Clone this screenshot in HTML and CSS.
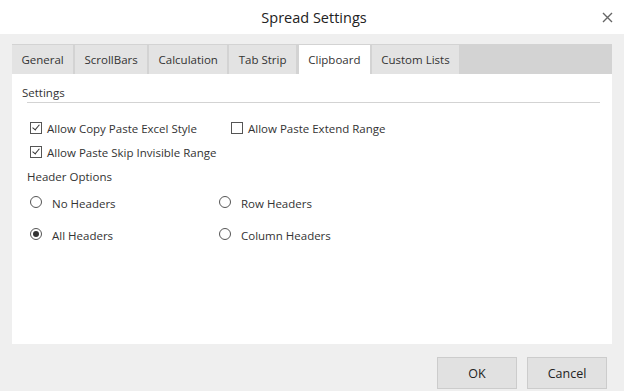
FILE: index.html
```html
<!DOCTYPE html>
<html lang="en">
  <head>
    <meta charset="UTF-8" />
    <title>Spread Settings</title>
    <link rel="stylesheet" href="styles.css">
  </head>
  <body>
    <div class="dialog">
      <header class="titlebar">
        <span class="title">Spread Settings</span>
        <button class="close-button" aria-label="Close">
          <svg width="11" height="11" viewBox="0 0 11 11">
            <path d="M1 1 L10 10 M10 1 L1 10" stroke="#666" stroke-width="1.4" />
          </svg>
        </button>
      </header>

      <div class="dialog-body">
        <div class="tabs">
          <div class="tab">General</div>
          <div class="tab">ScrollBars</div>
          <div class="tab">Calculation</div>
          <div class="tab">Tab Strip</div>
          <div class="tab active">Clipboard</div>
          <div class="tab">Custom Lists</div>
        </div>

        <div class="panel">
          <div class="group-title">Settings</div>
          <div class="group-line"></div>

          <div class="check-row first">
            <label class="check wide"><span class="box checked"></span>Allow Copy Paste Excel Style</label>
            <label class="check"><span class="box"></span>Allow Paste Extend Range</label>
          </div>
          <div class="check-row">
            <label class="check"><span class="box checked"></span>Allow Paste Skip Invisible Range</label>
          </div>

          <div class="sub-title">Header Options</div>
          <div class="radio-grid">
            <label class="radio"><span class="dot"></span>No Headers</label>
            <label class="radio"><span class="dot"></span>Row Headers</label>
            <label class="radio"><span class="dot selected"></span>All Headers</label>
            <label class="radio"><span class="dot"></span>Column Headers</label>
          </div>
        </div>
      </div>

      <footer class="footer">
        <button class="btn">OK</button>
        <button class="btn">Cancel</button>
      </footer>
    </div>
  </body>
</html>
```

FILE: styles.css
```css
* {
  box-sizing: border-box;
  margin: 0;
  padding: 0;
}

body {
  font-family: "Open Sans", "Noto Sans", sans-serif;
  font-size: 11.5px;
  color: #333;
  background: #efefef;
}

.dialog {
  width: 624px;
  height: 391px;
  background: #efefef;
}

.titlebar {
  height: 34px;
  background: #fff;
  display: flex;
  align-items: center;
  justify-content: center;
  position: relative;
}

.title {
  font-size: 14.5px;
  color: #222;
  padding-left: 4px;
}

.close-button {
  position: absolute;
  right: 10px;
  top: 11px;
  width: 13px;
  height: 13px;
  border: none;
  background: none;
  display: flex;
  align-items: center;
  justify-content: center;
}

.dialog-body {
  padding: 10px 12px 0;
}

.tabs {
  height: 30px;
  background: #d3d3d3;
  display: flex;
  gap: 2px;
  padding-top: 1px;
}

.tab {
  background: #e3e3e3;
  padding: 0 9.4px;
  display: flex;
  align-items: center;
  color: #333;
}

.tab.active {
  background: #fff;
  margin-left: 1px;
}

.panel {
  height: 270px;
  background: #fff;
  padding: 10px 12px 0 10px;
}

.group-title {
  line-height: 18px;
}

.group-line {
  height: 1px;
  background: #d3d3d3;
  margin: 0 0 0 5px;
  width: 573px;
}

.check-row {
  display: flex;
  margin-top: 6px;
  padding-left: 8px;
  height: 18px;
  align-items: center;
}

.check-row.first {
  margin-top: 16px;
}

.check {
  display: flex;
  align-items: center;
}

.check.wide {
  width: 201px;
}

.box {
  width: 12px;
  height: 12px;
  border: 1px solid #555;
  margin-right: 5px;
  position: relative;
}

.box.checked::after {
  content: "";
  position: absolute;
  left: 3px;
  top: 0px;
  width: 3px;
  height: 6px;
  border: solid #333;
  border-width: 0 1.5px 1.5px 0;
  transform: rotate(40deg);
}

.sub-title {
  margin-top: 7px;
  padding-left: 5px;
  line-height: 18px;
}

.radio-grid {
  display: grid;
  grid-template-columns: 189px auto;
  row-gap: 14px;
  padding-left: 8px;
  margin-top: 8px;
}

.radio {
  display: flex;
  align-items: center;
  height: 18px;
}

.dot {
  width: 12px;
  height: 12px;
  border: 1px solid #555;
  border-radius: 50%;
  margin-right: 10px;
  position: relative;
  top: -1px;
}

.dot.selected::after {
  content: "";
  position: absolute;
  left: 2px;
  top: 2px;
  width: 6px;
  height: 6px;
  border-radius: 50%;
  background: #333;
}

.footer {
  display: flex;
  justify-content: flex-end;
  gap: 10px;
  padding: 13px 17px 0;
}

.btn {
  width: 80px;
  height: 32px;
  background: #e1e1e1;
  border: 1px solid #ccc;
  font-family: "Open Sans", "Noto Sans", sans-serif;
  font-size: 12.5px;
  color: #222;
}
```
